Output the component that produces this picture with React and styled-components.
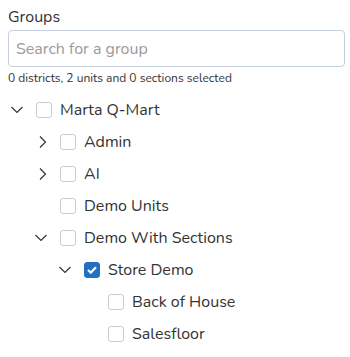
import React from 'react';
import styled, { createGlobalStyle } from 'styled-components';

const Global = createGlobalStyle`
    body {
        margin: 0;
        background: #fff;
        font-family: "Nunito", Lato, "Noto Sans", sans-serif;
        color: #333;
    }
`

const Container = styled.div`
    padding: 6px 8px 0 8px;
`
const Label = styled.div`
    font-size: 16px;
    line-height: 22px;
    margin-bottom: 2px;
`
const SearchInput = styled.input`
    box-sizing: border-box;
    width: 337px;
    height: 37px;
    padding: 0 7px;
    border: 1px solid #c5d0dc;
    border-radius: 4px;
    font-family: inherit;
    font-size: 16px;
    color: #333;
    outline: none;
    &::placeholder {
        color: #9a9a9a;
    }
`
const Caption = styled.div`
    font-size: 12px;
    line-height: 14px;
    margin-top: 4px;
    color: #333;
`
const Tree = styled.div`
    margin-top: 9px;
`
const Row = styled.div`
    display: flex;
    align-items: center;
    height: 32px;
    padding-left: ${props => props.level * 24}px;
`
const Toggle = styled.span`
    box-sizing: border-box;
    width: 28px;
    padding-left: 3px;
    display: flex;
    align-items: center;
`
const Box = styled.span`
    box-sizing: border-box;
    width: 16px;
    height: 16px;
    border-radius: 3px;
    border: 1px solid ${props => props.checked ? "#2170c2" : "#cccccc"};
    background: ${props => props.checked ? "#2170c2" : "#fff"};
    display: flex;
    align-items: center;
    justify-content: center;
    margin-right: 8px;
`
const Name = styled.span`
    font-size: 16px;
    color: #333;
`

const Chevron = ({ open }) => (
    <svg width="12" height="12" viewBox="0 0 12 12" fill="none" stroke="#333" strokeWidth="1.2">
        {open ? <path d="M0.5 3 L6 8.5 L11.5 3" /> : <path d="M5 0.5 L10.5 6 L5 11.5" />}
    </svg>
)

const items = [
    { name: "Marta Q-Mart", level: 0, toggle: "open" },
    { name: "Admin", level: 1, toggle: "closed" },
    { name: "AI", level: 1, toggle: "closed" },
    { name: "Demo Units", level: 1 },
    { name: "Demo With Sections", level: 1, toggle: "open" },
    { name: "Store Demo", level: 2, toggle: "open", checked: true },
    { name: "Back of House", level: 3 },
    { name: "Salesfloor", level: 3 },
]

const App = () => {
    return (
        <Container>
            <Global/>
            <Label>Groups</Label>
            <SearchInput placeholder="Search for a group"/>
            <Caption>0 districts, 2 units and 0 sections selected</Caption>
            <Tree>
                {items.map(item => (
                    <Row key={item.name} level={item.level}>
                        <Toggle>{item.toggle && <Chevron open={item.toggle === "open"}/>}</Toggle>
                        <Box checked={item.checked}>
                            {item.checked && (
                                <svg width="10" height="8" viewBox="0 0 10 8" fill="none" stroke="#fff" strokeWidth="2.2">
                                    <path d="M1 4 L3.8 6.6 L9 1.2" />
                                </svg>
                            )}
                        </Box>
                        <Name>{item.name}</Name>
                    </Row>
                ))}
            </Tree>
        </Container>
    );
};

export default App;
